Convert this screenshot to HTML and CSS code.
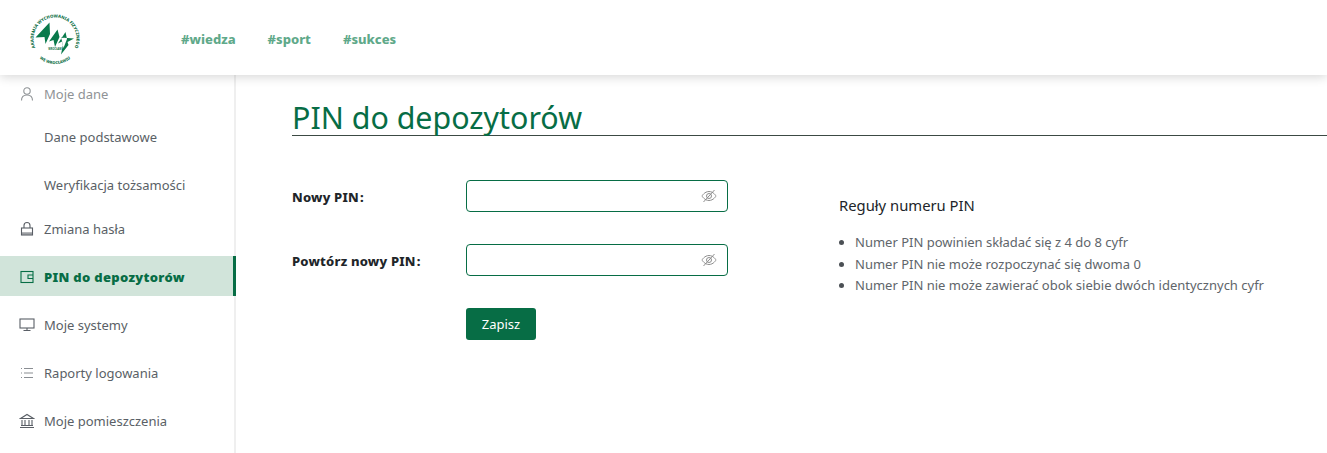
FILE: index.html
```html
<!DOCTYPE html>
<html lang="pl">
<head>
<meta charset="utf-8">
<title>PIN do depozytorów</title>
<link rel="stylesheet" href="styles.css">
</head>
<body>
<header class="topbar">
  <a class="logo" href="#">
    <svg viewBox="0 0 54 54" width="54" height="54">
      <defs>
        <path id="ring-top" d="M16.250 46.600A21.500 21.500 0 1 1 37.750 46.600"/>
        <path id="ring-bottom" d="M5.350 40.500A25 25 0 0 0 48.650 40.500"/>
      </defs>
      <text class="logo-text"><textPath href="#ring-top" startOffset="50%">AKADEMIA WYCHOWANIA FIZYCZNEGO</textPath></text>
      <text class="logo-text small"><textPath href="#ring-bottom" startOffset="50%">WE WROCŁAWIU</textPath></text>
      <path class="logo-mark" d="M21.500 11.500 7.500 26.500l9-.5 1 7 4.500-10zM29.500 18.500l-8.500 12 4.500-1.500 1.500 7 4.500-10zM37.500 21 30 32.500l4-2 1.500 6.500 3.500-9zM33 26.500l13 1-6.500 3.500 1 3-7.500 9.500 2-10z"/>
      <text class="logo-mini" x="27" y="39">WROCŁAW</text>
    </svg>
  </a>
  <nav class="tags">
    <a href="#">#wiedza</a>
    <a href="#">#sport</a>
    <a href="#">#sukces</a>
  </nav>
</header>
<div class="layout">
  <aside class="sidebar">
    <a class="item top muted" href="#">
      <svg class="ico" viewBox="0 0 16 16"><circle cx="8" cy="5" r="3.200"/><path d="M2.500 14.500c0-3.500 2.300-5.500 5.500-5.500s5.500 2 5.500 5.500"/></svg>
      <span>Moje dane</span>
    </a>
    <a class="item sub" href="#"><span>Dane podstawowe</span></a>
    <a class="item sub last" href="#"><span>Weryfikacja tożsamości</span></a>
    <a class="item short" href="#">
      <svg class="ico" viewBox="0 0 16 16"><path d="M5 7V4.500a3 3 0 0 1 6 0V7"/><rect x="2.500" y="7" width="11" height="7"/><path class="ico-band" d="M2.500 12.500h11"/></svg>
      <span>Zmiana hasła</span>
    </a>
    <a class="item active" href="#">
      <svg class="ico" viewBox="0 0 16 16"><rect x="2" y="2.500" width="12" height="11"/><path d="M14 6H9v3.500h5"/></svg>
      <span>PIN do depozytorów</span>
    </a>
    <a class="item" href="#">
      <svg class="ico" viewBox="0 0 16 16"><rect x="1" y="2" width="14" height="9"/><path d="M8 11v2.500M4.500 13.500h7"/></svg>
      <span>Moje systemy</span>
    </a>
    <a class="item" href="#">
      <svg class="ico light" viewBox="0 0 16 16"><path d="M2 3.500h1M2 8h1M2 12.500h1M5 3.500h9M5 8h9M5 12.500h9"/></svg>
      <span>Raporty logowania</span>
    </a>
    <a class="item" href="#">
      <svg class="ico" viewBox="0 0 16 16"><path d="M1.500 5.500 8 1.500l6.500 4zM3 7v5M6 7v5M10 7v5M13 7v5M2 12.500h12M1 14.500h14"/></svg>
      <span>Moje pomieszczenia</span>
    </a>
  </aside>
  <main class="content">
    <h1 class="title">PIN do depozytorów</h1>
    <div class="columns">
      <form class="form">
        <div class="row">
          <label class="label">Nowy PIN<span class="colon">:</span></label>
          <div class="field">
            <input class="input" type="password">
            <svg class="eye" viewBox="0 0 16 16"><path d="M1 8s2.500-4.500 7-4.500S15 8 15 8s-2.500 4.500-7 4.500S1 8 1 8z"/><circle cx="8" cy="8" r="2.500"/><path d="M2.500 14 13.500 2"/></svg>
          </div>
        </div>
        <div class="row">
          <label class="label">Powtórz nowy PIN<span class="colon">:</span></label>
          <div class="field">
            <input class="input" type="password">
            <svg class="eye" viewBox="0 0 16 16"><path d="M1 8s2.500-4.500 7-4.500S15 8 15 8s-2.500 4.500-7 4.500S1 8 1 8z"/><circle cx="8" cy="8" r="2.500"/><path d="M2.500 14 13.500 2"/></svg>
          </div>
        </div>
        <div class="row">
          <span class="label"></span>
          <button class="btn" type="button">Zapisz</button>
        </div>
      </form>
      <section class="rules">
        <h2 class="rules-title">Reguły numeru PIN</h2>
        <ul class="rules-list">
          <li>Numer PIN powinien składać się z 4 do 8 cyfr</li>
          <li>Numer PIN nie może rozpoczynać się dwoma 0</li>
          <li>Numer PIN nie może zawierać obok siebie dwóch identycznych cyfr</li>
        </ul>
      </section>
    </div>
  </main>
</div>
</body>
</html>
```
FILE: styles.css
```css
* { box-sizing: border-box; }
html, body { margin: 0; height: 100%; overflow: hidden; }
body { font-family: "Noto Sans", "Open Sans", sans-serif; font-size: 13px; color: #212529; background: #fff; }
a { text-decoration: none; color: inherit; }

.topbar { position: relative; z-index: 2; height: 75px; display: flex; align-items: center; background: #fff; box-shadow: 0 2px 10px rgba(0,0,0,.16); }
.logo { width: 180px; padding: 0 0 0 28px; display: flex; }
.logo-text { font: 800 4.300px "Noto Sans", sans-serif; fill: #0b6e45; text-anchor: middle; }
.logo-text.small { font-size: 4px; }
.logo-mini { font: 700 2.600px "Noto Sans", sans-serif; fill: #0b6e45; text-anchor: middle; }
.logo-mark { fill: #0a7a4c; }
.tags { display: flex; gap: 32px; padding: 2px 0 0 1px; font-size: 13px; font-weight: 800; color: #5fa98a; }

.layout { display: flex; height: 378px; }
.sidebar { width: 236px; flex: none; border-right: 2px solid #efefef; display: flex; flex-direction: column; }
.item { height: 48px; flex: none; display: flex; align-items: center; gap: 9px; padding-left: 19px; color: #5a5f66; font-size: 13px; }
.item.top { height: 38px; }
.item.sub { padding-left: 44px; }
.item.short { height: 40px; margin-bottom: 7px; }
.item.muted { color: #8f9396; }
.item.active { height: 40px; margin: 0 -2px 5px 0; padding-top: 1px; background: #d1e4da; border-right: 3px solid #076d45; color: #076d45; font-weight: 900; letter-spacing: .3px; }
.ico { width: 16px; height: 16px; flex: none; fill: none; stroke: currentColor; stroke-width: 1.100; }
.ico-band { stroke-width: 2.500; opacity: .6; }
.ico.light { opacity: .7; }

.content { flex: 1; min-width: 0; padding: 24px 0 0 56px; }
.title { margin: 0 0 44px; height: 37px; border-bottom: 1px solid #3c4a44; font-size: 30.400px; font-weight: 400; line-height: 38px; color: #076d45; }
.columns { display: flex; }
.form { width: 436px; flex: none; display: flex; flex-direction: column; gap: 32px; }
.row { display: flex; align-items: center; }
.label { width: 174px; flex: none; padding-top: 2px; font-weight: 800; font-size: 13px; letter-spacing: .2px; color: #212529; }
.colon { margin-left: 1px; }
.field { position: relative; width: 262px; }
.input { display: block; width: 100%; height: 32px; padding: 0 36px 0 8px; background: #fff; border: 1px solid #076d45; border-radius: 4px; outline: 0; }
.eye { position: absolute; top: 8px; right: 11px; width: 16px; height: 16px; fill: none; stroke: #8e8e8e; stroke-width: 1; }
.btn { width: 70px; height: 32px; padding: 0; border: 0; border-radius: 3px; background: #076d45; color: #fff; font: 400 13px "Noto Sans", sans-serif; }

.rules { margin: 14px 0 0 111px; }
.rules-title { margin: 0 0 16px; font-size: 14.800px; line-height: 22px; font-weight: 400; color: #212529; }
.rules-list { margin: 0; padding: 0 0 0 16px; font-size: 13px; line-height: 21.500px; color: #60656a; }
.rules-list li::marker { color: #4b5055; }
```
